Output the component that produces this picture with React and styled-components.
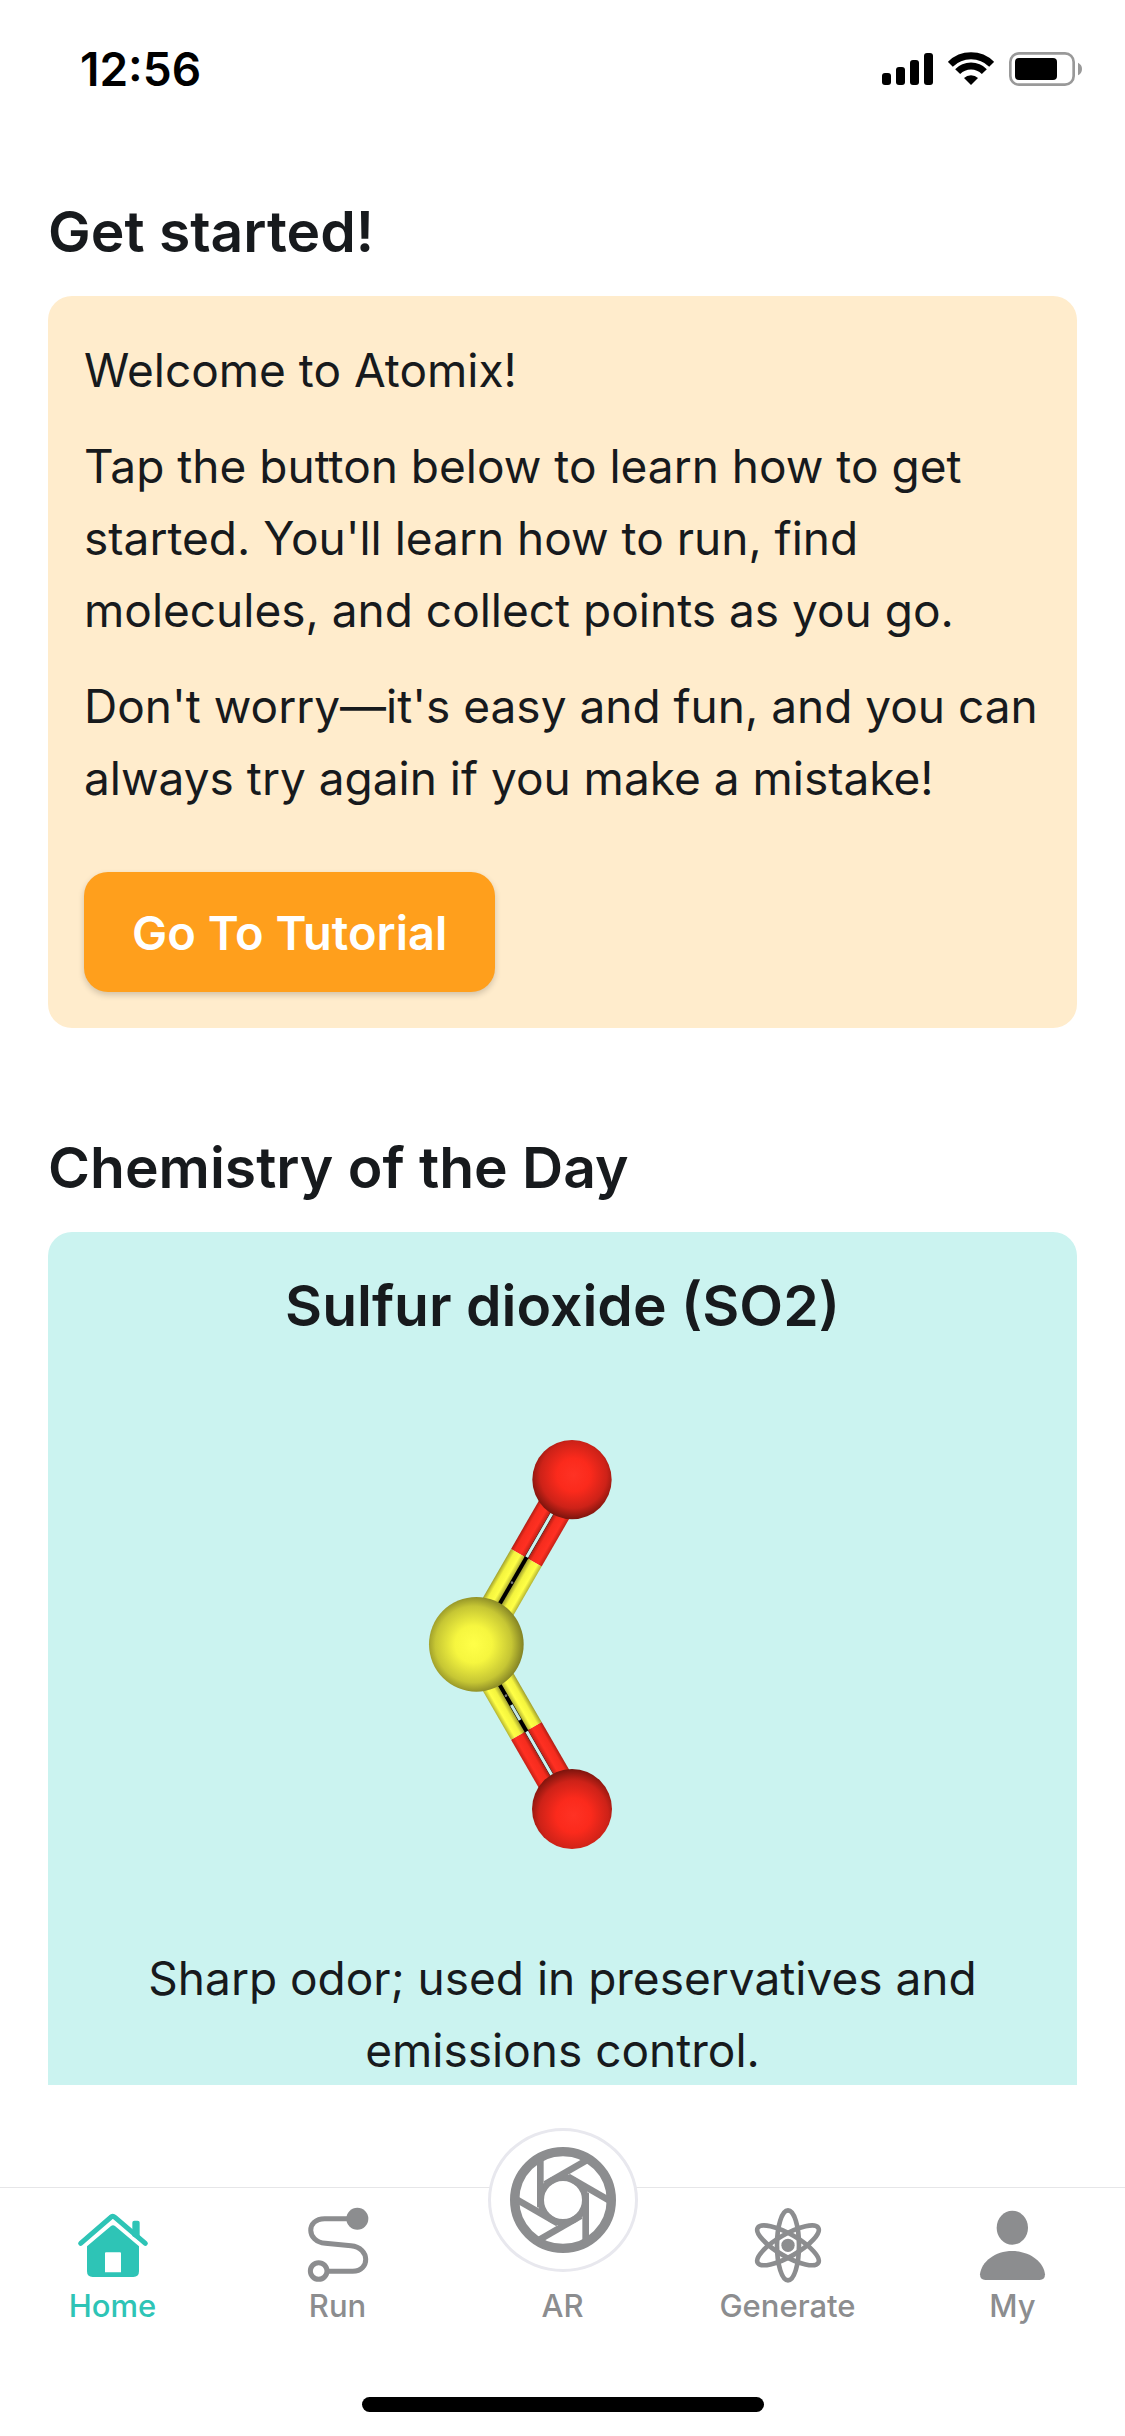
import React from "react";
import styled, { createGlobalStyle } from "styled-components";

const ink = "#171a1d";
const teal = "#2ec4b6";
const grey = "#8c8d8f";

const GlobalStyle = createGlobalStyle`
  * { box-sizing: border-box; }
  body { margin: 0; background: #fff; }
  h1, h2, h3, p { margin: 0; }
`;

const Screen = styled.div`
  display: flex;
  flex-direction: column;
  height: 100vh;
  color: ${ink};
  background: #fff;
  font-family: Inter, "Liberation Sans", sans-serif;
`;

const StatusBar = styled.header`
  display: flex;
  flex: none;
  align-items: center;
  justify-content: space-between;
  height: 138px;
  padding: 0 43px 0 80px;
  color: #000;
`;

const Clock = styled.time`
  font-size: 46px;
  font-weight: 600;
  line-height: 72px;
`;

const StatusIcons = styled.div`
  display: flex;
  align-items: center;
  gap: 15px;
`;

const Content = styled.main`
  display: flex;
  flex: 1;
  flex-direction: column;
  gap: 104px;
  min-height: 0;
  padding: 58px 48px 0;
  overflow-y: auto;
  scrollbar-width: none;
`;

const Section = styled.section`
  display: flex;
  flex-direction: column;
  gap: 28px;
`;

const Title = styled.h2`
  font-size: 57px;
  font-weight: 600;
  line-height: 72px;
`;

const Card = styled.div`
  display: flex;
  flex-direction: column;
  align-items: ${(p) => (p.$centered ? "center" : "flex-start")};
  padding: 38px 36px 36px;
  border-radius: 24px;
  background: ${(p) => p.$background};
  text-align: ${(p) => (p.$centered ? "center" : "left")};
`;

const Copy = styled.div`
  display: flex;
  flex-direction: column;
  gap: 24px;
`;

const Text = styled.p`
  font-size: 46px;
  line-height: 72px;
`;

const Button = styled.button`
  height: 120px;
  margin-top: 58px;
  padding: 0 48px;
  border: 0;
  border-radius: 24px;
  color: #fff;
  background: #ff9f1c;
  box-shadow: 0 3px 6px rgba(0, 0, 0, 0.18);
  font: 600 47px Inter, "Liberation Sans", sans-serif;
  cursor: pointer;
`;

const MoleculeDrawing = styled.svg`
  display: block;
  width: 600px;
  max-width: 100%;
  aspect-ratio: 1;
`;

const Footer = styled.footer`
  display: flex;
  flex: none;
  flex-direction: column;
  align-items: center;
  margin-top: 102px;
  padding-bottom: 24px;
`;

const Tabs = styled.nav`
  display: grid;
  grid-template-columns: repeat(5, 1fr);
  align-self: stretch;
  padding: 18px 0 73px;
  border-top: 1px solid #e6e6e8;
`;

const Tab = styled.a`
  display: flex;
  flex-direction: column;
  align-items: center;
  gap: 2px;
  color: ${(p) => (p.$active ? teal : grey)};
  font-size: 31px;
  font-weight: 500;
  line-height: 36px;
  text-decoration: none;
`;

const TabIcon = styled.svg`
  display: block;
  width: 80px;
  height: 80px;
`;

const RaisedCircle = styled.span`
  display: flex;
  align-items: center;
  justify-content: center;
  width: 150px;
  height: 144px;
  margin: -78px 0 14px;
  border: 3px solid #e8e8ee;
  border-radius: 50%;
  background: #fff;
`;

const HomeIndicator = styled.div`
  width: 402px;
  height: 15px;
  border-radius: 8px;
  background: #000;
`;

const SignalIcon = () => (
  <svg width="51" height="34" viewBox="66 66 153 102" aria-hidden="true">
    <rect x="66" y="129" width="27" height="36" rx="9" />
    <rect x="108" y="111" width="27" height="54" rx="9" />
    <rect x="150" y="90" width="27" height="75" rx="9" />
    <rect x="192" y="69" width="27" height="96" rx="9" />
  </svg>
);

const WifiIcon = () => (
  <svg width="46" height="34" viewBox="264 66 138 102" aria-hidden="true">
    <g fill="none" stroke="#000" strokeWidth="21">
      <path d="M271 103A88 88 0 0 1 395 103" />
      <path d="M293 125A56 56 0 0 1 373 125" />
    </g>
    <path d="M333 165L312 144A30 30 0 0 1 354 144Z" />
  </svg>
);

const BatteryIcon = () => (
  <svg width="73" height="34" viewBox="447 66 219 102" aria-hidden="true">
    <rect x="451" y="70" width="190" height="94" rx="26" fill="none" stroke="#999" strokeWidth="8" />
    <rect x="465" y="84" width="126" height="66" rx="12" />
    <path d="M654 98Q666 104 666 117T654 136Z" fill="#999" />
  </svg>
);

const HomeIcon = () => (
  <TabIcon viewBox="39 48 240 240" fill="currentColor" aria-hidden="true">
    <path d="M62 160L152 82Q158 76 165 82L256 160" fill="none" stroke="currentColor" strokeWidth="15" strokeLinecap="round" />
    <path d="M217 138V98Q217 92 223 92H233Q239 92 239 98V152Z" />
    <path fillRule="evenodd" d="M81 169L153 108Q159 103 165 108L237 169V244Q237 261 220 261H98Q81 261 81 244ZM138 187Q135 187 135 190V247H183V190Q183 187 180 187Z" />
  </TabIcon>
);

const RouteIcon = () => (
  <TabIcon viewBox="24 48 240 240" fill="none" stroke="currentColor" strokeWidth="15" aria-hidden="true">
    <path d="M180 86H104C48 86 48 155 106 160L183 167C241 172 241 244 188 244H112" />
    <circle cx="86" cy="243" r="25" />
    <circle cx="202" cy="86" r="33" fill="currentColor" stroke="none" />
  </TabIcon>
);

const ApertureIcon = () => (
  <svg width="106" height="106" viewBox="-159 -159 318 318" fill="none" stroke="currentColor" strokeWidth="20" aria-hidden="true">
    <circle r="145" strokeWidth="28" />
    <circle r="67" />
    {[0, 60, 120, 180, 240, 300].map((angle) => (
      <path key={angle} d="M-68 -128V22" transform={`rotate(${angle})`} />
    ))}
  </svg>
);

const AtomIcon = () => (
  <TabIcon viewBox="39 33 240 240" fill="none" stroke="currentColor" strokeWidth="14" aria-hidden="true">
    {[0, 60, 120].map((angle) => (
      <ellipse key={angle} cx="159" cy="151" rx="33" ry="105" transform={`rotate(${angle} 159 151)`} />
    ))}
    <circle cx="159" cy="151" r="20" fill="currentColor" stroke="none" />
  </TabIcon>
);

const PersonIcon = () => (
  <TabIcon viewBox="39 33 240 240" fill="currentColor" aria-hidden="true">
    <ellipse cx="157" cy="98" rx="47" ry="51" />
    <path d="M60 238C64 200 105 168 157 168S251 200 255 238Q255 255 239 255H76Q60 255 60 238Z" />
  </TabIcon>
);

const Stick = ({ x, y, length, paint }) => (
  <rect x={x} y={y} width="47" height={length} fill={`url(#${paint})`} />
);

const DoubleBond = ({ angle, children }) => (
  <g transform={`translate(229 733) rotate(${angle})`}>
    <path d="M-6 -480V-290M6 -480V-290" stroke="#3a2020" strokeWidth="3" />
    {children}
    {[-53, 6].map((x) => (
      <React.Fragment key={x}>
        <Stick x={x} y={-500} length={200} paint="redStick" />
        <Stick x={x} y={-300} length={240} paint="yellowStick" />
      </React.Fragment>
    ))}
  </g>
);

const Molecule = () => (
  <MoleculeDrawing viewBox="-411 -174 1800 1800" role="img" aria-label="Sulfur dioxide molecule">
    <defs>
      <linearGradient id="redStick">
        <stop offset="0" stopColor="#b01e14" />
        <stop offset="0.25" stopColor="#f52c1e" />
        <stop offset="0.7" stopColor="#ff3022" />
        <stop offset="1" stopColor="#c42016" />
      </linearGradient>
      <linearGradient id="yellowStick">
        <stop offset="0" stopColor="#a0a02e" />
        <stop offset="0.3" stopColor="#f4f43e" />
        <stop offset="0.7" stopColor="#ffff46" />
        <stop offset="1" stopColor="#b4b432" />
      </linearGradient>
      <radialGradient id="oxygenTop" cx="0.52" cy="0.44" r="0.6">
        <stop offset="0" stopColor="#ff3224" />
        <stop offset="0.35" stopColor="#fb2a1c" />
        <stop offset="0.7" stopColor="#cd2218" />
        <stop offset="1" stopColor="#64100a" />
      </radialGradient>
      <radialGradient id="oxygenBottom" cx="0.52" cy="0.58" r="0.62">
        <stop offset="0" stopColor="#ff3224" />
        <stop offset="0.35" stopColor="#fb2a1c" />
        <stop offset="0.7" stopColor="#cd2218" />
        <stop offset="1" stopColor="#64100a" />
      </radialGradient>
      <radialGradient id="sulfur" cx="0.47" cy="0.5" r="0.56">
        <stop offset="0" stopColor="#ffff48" />
        <stop offset="0.35" stopColor="#f6f63f" />
        <stop offset="0.72" stopColor="#c6c634" />
        <stop offset="1" stopColor="#727220" />
      </radialGradient>
    </defs>
    <DoubleBond angle={30}>
      <path d="M0 -302V-100" stroke="#000" strokeWidth="17" />
      <circle cx="0" cy="-214" r="4" fill="#777" />
    </DoubleBond>
    <DoubleBond angle={150}>
      <path d="M0 -302V-268M0 -204V-100M-6 -302V-200M6 -302V-200" stroke="#000" strokeWidth="15" />
      <path d="M0 -262V-210" stroke="#c4e6e2" strokeWidth="9" />
      <circle cx="0" cy="-178" r="4" fill="#777" />
    </DoubleBond>
    <circle cx="516" cy="239" r="119" fill="url(#oxygenTop)" />
    <circle cx="516" cy="1227" r="120" fill="url(#oxygenBottom)" />
    <circle cx="229" cy="733" r="142" fill="url(#sulfur)" />
  </MoleculeDrawing>
);

export default function App() {
  return (
    <Screen>
      <GlobalStyle />
      <StatusBar>
        <Clock>12:56</Clock>
        <StatusIcons>
          <SignalIcon />
          <WifiIcon />
          <BatteryIcon />
        </StatusIcons>
      </StatusBar>

      <Content>
        <Section>
          <Title>Get started!</Title>
          <Card $background="#ffeccc">
            <Copy>
              <Text>Welcome to Atomix!</Text>
              <Text>
                Tap the button below to learn how to get started. You'll learn how to run, find
                molecules, and collect points as you go.
              </Text>
              <Text>
                Don't worry—it's easy and fun, and you can always try again if you make a mistake!
              </Text>
            </Copy>
            <Button type="button">Go To Tutorial</Button>
          </Card>
        </Section>

        <Section>
          <Title>Chemistry of the Day</Title>
          <Card $background="#cbf3f0" $centered>
            <Title as="h3">Sulfur dioxide (SO2)</Title>
            <Molecule />
            <Text>Sharp odor; used in preservatives and emissions control.</Text>
          </Card>
        </Section>
      </Content>

      <Footer>
        <Tabs aria-label="Main">
          <Tab href="#home" $active aria-current="page">
            <HomeIcon />
            Home
          </Tab>
          <Tab href="#run">
            <RouteIcon />
            Run
          </Tab>
          <Tab href="#ar">
            <RaisedCircle>
              <ApertureIcon />
            </RaisedCircle>
            AR
          </Tab>
          <Tab href="#generate">
            <AtomIcon />
            Generate
          </Tab>
          <Tab href="#my">
            <PersonIcon />
            My
          </Tab>
        </Tabs>
        <HomeIndicator />
      </Footer>
    </Screen>
  );
}
